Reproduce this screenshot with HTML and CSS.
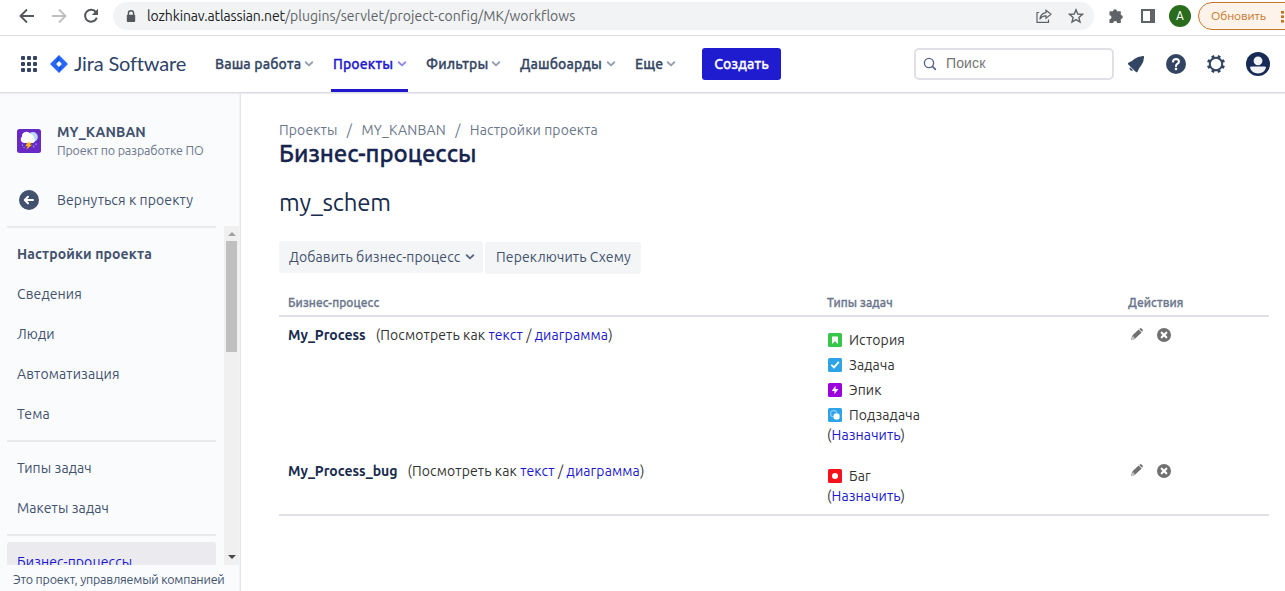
FILE: index.html
```html
<!DOCTYPE html>
<html lang="ru">
<head>
<meta charset="utf-8">
<title>Бизнес-процессы</title>
<link rel="stylesheet" href="styles.css">
</head>
<body>
<svg width="0" height="0" class="defs">
  <defs>
    <symbol id="chev" viewBox="0 0 10 8"><path d="M1.7 2.2 5 5.4 8.3 2.2" fill="none" stroke="currentColor" stroke-width="1.9" stroke-linecap="round" stroke-linejoin="round"/></symbol>
    <symbol id="pencil" viewBox="0 0 12 12"><path d="M.6 11.4 1.3 8.3 3.7 10.7Z" fill="none" stroke="#707070" stroke-width=".7"/><path d="M1.3 7.6 7.6 1.4 10.6 4.4 4.3 10.6ZM8.2 .9 9 .4Q9.8 -.2 10.5.4L11.6 1.5Q12.2 2.3 11.6 3L11.1 3.8Z" fill="#707070"/></symbol>
    <symbol id="remove" viewBox="0 0 14 14"><circle cx="7" cy="7" r="7" fill="#707070"/><path d="M4.7 4.7 9.3 9.3M9.3 4.7 4.7 9.3" stroke="#fff" stroke-width="2.2" stroke-linecap="round"/></symbol>
  </defs>
</svg>

<div class="browser">
  <svg class="ic back" width="16" height="16" viewBox="0 0 16 16"><path d="M15 8H2M8 1.5 1.5 8 8 14.5" fill="none" stroke="#54575b" stroke-width="1.9"/></svg>
  <svg class="ic forward" width="16" height="16" viewBox="0 0 16 16"><path d="M1 8H14M8 1.5 14.5 8 8 14.5" fill="none" stroke="#bdbfc1" stroke-width="1.8"/></svg>
  <svg class="ic reload" width="16" height="16" viewBox="0 0 16 16"><path d="M13 4.2A6 6 0 1 0 13.8 9.6" fill="none" stroke="#54575b" stroke-width="2"/><path d="M15 .8V7H8.8Z" fill="#54575b"/></svg>
  <div class="omnibox">
    <svg width="10" height="13" viewBox="0 0 10 13"><path d="M2.4 5.5V3.4a2.6 2.6 0 0 1 5.2 0V5.5" fill="none" stroke="#54575b" stroke-width="1.4"/><rect x=".8" y="4.7" width="8.4" height="7.3" rx="1" fill="#54575b"/></svg>
    <span class="url"><span class="host">lozhkinav.atlassian.net</span><span class="path">/plugins/servlet/project-config/MK/workflows</span></span>
    <svg class="share" width="16" height="16" viewBox="0 0 16 16" fill="none" stroke="#5f6368" stroke-width="1.2"><path d="M3.2 4.5H1V14.3H12.5V11.5"/><path d="M10 2.2 15 6.2 10 10.2V7.9Q6 7.6 3.8 11.2 4.4 5.4 10 4.6Z"/></svg>
    <svg class="star" width="16" height="16" viewBox="0 0 16 16"><path d="M8 1.7 9.8 6 14.5 6.4 10.9 9.5 12 14 8 11.6 4 14 5.1 9.5 1.5 6.4 6.2 6Z" fill="none" stroke="#5f6368" stroke-width="1.4"/></svg>
  </div>
  <svg class="puzzle" width="16" height="16" viewBox="0 0 16 16"><path d="M1.5 3.2H5A2 2 0 0 1 9 3.2H12.8V7A2 2 0 0 1 12.8 11V15H9.2A2 2 0 0 0 5.2 15H1.5V11.2A2 2 0 0 0 1.5 7.2Z" fill="#5f6368"/></svg>
  <svg class="panel" width="14" height="14" viewBox="0 0 14 14"><rect x="1" y="1" width="12" height="12" fill="#fff" stroke="#5f6368" stroke-width="2"/><rect x="9" y="1" width="4.5" height="12" fill="#5f6368"/></svg>
  <span class="profile">A</span>
  <div class="update"><span>Обновить</span><i class="dots"></i></div>
</div>

<header class="nav">
  <svg class="switcher" width="16" height="16" viewBox="0 0 16 16" fill="#344563"><rect width="4" height="4" rx="1"/><rect x="6" width="4" height="4" rx="1"/><rect x="12" width="4" height="4" rx="1"/><rect y="6" width="4" height="4" rx="1"/><rect x="6" y="6" width="4" height="4" rx="1"/><rect x="12" y="6" width="4" height="4" rx="1"/><rect y="12" width="4" height="4" rx="1"/><rect x="6" y="12" width="4" height="4" rx="1"/><rect x="12" y="12" width="4" height="4" rx="1"/></svg>
  <svg class="logo" width="18" height="18" viewBox="0 0 18 18"><path d="M9 0 17.5 8.4Q18 9 17.5 9.6L9 18 .5 9.6Q0 9 .5 8.4Z" fill="#2668fa"/><path d="M9 1.5V6L7 8Q5.6 5.4 9 1.5Z" fill="#1450d8"/><path d="M9 16.5V12L11 10Q12.4 12.6 9 16.5Z" fill="#1450d8"/><path d="M9 6.1 11.9 9 9 11.9 6.1 9Z" fill="#fff"/></svg>
  <span class="brand">Jira Software</span>
  <nav class="menu">
    <a class="m1"><span>Ваша работа</span><svg width="10" height="8"><use href="#chev"/></svg></a>
    <a class="m2 active"><span>Проекты</span><svg width="10" height="8"><use href="#chev"/></svg></a>
    <a class="m3"><span>Фильтры</span><svg width="10" height="8"><use href="#chev"/></svg></a>
    <a class="m4"><span>Дашбоарды</span><svg width="10" height="8"><use href="#chev"/></svg></a>
    <a class="m5"><span>Еще</span><svg width="10" height="8"><use href="#chev"/></svg></a>
  </nav>
  <button class="create"><span>Создать</span></button>
  <div class="search"><svg width="14" height="14" viewBox="0 0 14 14"><circle cx="6" cy="6" r="4.6" fill="none" stroke="#56658a" stroke-width="1.4"/><path d="M9.4 9.4 12.4 12.4" stroke="#56658a" stroke-width="1.6" stroke-linecap="round"/></svg><span>Поиск</span></div>
  <svg class="bell" width="18" height="18" viewBox="0 0 18 18" fill="#344563"><path d="M1 9.3Q.6 8.2 1.8 7.6 5.2 6.4 7.3 4 10.5 1.2 16 .9 17.2.8 17.1 2 16.8 7.5 14 10.7 11.8 12.8 10.6 16.6 10 17.8 8.9 17Z"/><path d="M3 12.2 6.2 15.4Q4.6 16.4 3.2 15.1 2 13.8 3 12.2Z"/></svg>
  <svg class="help" width="20" height="20" viewBox="0 0 20 20"><circle cx="10" cy="10" r="10" fill="#344563"/><path d="M7 7.6Q7.2 5 10 5 13 5.1 13 7.7 12.9 9 11.3 9.9 10 10.6 10 12.2" fill="none" stroke="#fff" stroke-width="2" stroke-linecap="round"/><circle cx="10" cy="15" r="1.3" fill="#fff"/></svg>
  <svg class="gear" width="18" height="18" viewBox="0 0 18 18"><g stroke="#344563" fill="none" transform="rotate(22.5 9 9)"><circle cx="9" cy="9" r="6.2" stroke-width="2"/><path d="M9 0V3M9 15V18M0 9H3M15 9H18M2.6 2.6 4.8 4.8M13.2 13.2 15.4 15.4M15.4 2.6 13.2 4.8M4.8 13.2 2.6 15.4" stroke-width="3"/></g></svg>
  <svg class="user" width="24" height="24" viewBox="0 0 24 24"><circle cx="12" cy="12" r="12" fill="#172b56"/><circle cx="12" cy="8.8" r="4.4" fill="#f2f3f6"/><path d="M4 15.8Q4 14.5 5.5 14.5H18.5Q20 14.5 20 15.8 18.2 21.5 12 21.5 5.8 21.5 4 15.8Z" fill="#f2f3f6"/></svg>
</header>

<div class="body">
  <aside class="sidebar">
    <div class="project">
      <svg width="24" height="24" viewBox="0 0 24 24"><rect width="24" height="24" rx="2.5" fill="#6929c4"/><circle cx="15.8" cy="8" r="5" fill="#b9dafb"/><path d="M7 14A3.6 3.6 0 0 1 4.9 7.7 4.6 4.6 0 0 1 13.4 5 4.6 4.6 0 0 1 17 9.5 3.1 3.1 0 0 1 16.3 14Z" fill="#fff"/><path d="M10.5 13.5H14.5L13 15.8H15.2L9 20.8 10.8 17.2H8.3Z" fill="#ffb900"/><path d="M5.5 15.5V17M16.8 16.5V18.5M19 14.5V16M7 18V19" stroke="#98b7f1" stroke-width="1"/></svg>
      <div><b>MY_KANBAN</b><small>Проект по разработке ПО</small></div>
    </div>
    <a class="return"><svg width="20" height="20" viewBox="0 0 20 20"><circle cx="10" cy="10" r="10" fill="#42526e"/><path d="M14 10H6.5M9 6.8 5.8 10 9 13.2" fill="none" stroke="#fff" stroke-width="2" stroke-linecap="round" stroke-linejoin="round"/></svg><span>Вернуться к проекту</span></a>
    <div class="scroller">
      <div class="links">
        <a class="l0">Настройки проекта</a>
        <a class="l1">Сведения</a>
        <a class="l2">Люди</a>
        <a class="l3">Автоматизация</a>
        <a class="l4">Тема</a>
        <hr>
        <a class="l5">Типы задач</a>
        <a class="l6">Макеты задач</a>
        <hr>
        <a class="selected">Бизнес-процессы</a>
      </div>
      <div class="track"><i class="up"></i><i class="thumb"></i><i class="down"></i></div>
    </div>
    <footer><span>Это проект, управляемый компанией</span></footer>
  </aside>

  <main>
    <div class="crumbs"><span class="c1">Проекты</span><i>/</i><span class="c2">MY_KANBAN</span><i>/</i><span class="c3">Настройки проекта</span></div>
    <h1>Бизнес-процессы</h1>
    <h2>my_schem</h2>
    <div class="actions">
      <button class="add"><span>Добавить бизнес-процесс</span><svg width="10" height="8"><use href="#chev"/></svg></button>
      <button class="switch"><span>Переключить Схему</span></button>
    </div>
    <div class="table">
      <div class="row head"><span class="h1c">Бизнес-процесс</span><span class="h2c">Типы задач</span><span class="h3c">Действия</span></div>
      <div class="row r1">
        <div class="name"><b class="n1">My_Process</b><span class="view">(Посмотреть как <a>текст</a> / <a>диаграмма</a>)</span></div>
        <div class="types">
          <div class="t1"><svg width="14" height="14" viewBox="0 0 14 14"><rect width="14" height="14" rx="1.5" fill="#36c64c"/><path d="M4 3.5H10V11L7 8.2 4 11Z" fill="#fff"/></svg><span>История</span></div>
          <div class="t2"><svg width="14" height="14" viewBox="0 0 14 14"><rect width="14" height="14" rx="1.5" fill="#2ea3e8"/><path d="M3.9 7.3 6 9.4 10.4 4.4" fill="none" stroke="#fff" stroke-width="1.8" stroke-linecap="round"/></svg><span>Задача</span></div>
          <div class="t3"><svg width="14" height="14" viewBox="0 0 14 14"><rect width="14" height="14" rx="1.5" fill="#9c00dc"/><path d="M7.6 2.8V6H10.4L6.5 11.2V8H3.7Z" fill="#fff"/></svg><span>Эпик</span></div>
          <div class="t4"><svg width="14" height="14" viewBox="0 0 14 14"><rect width="14" height="14" rx="1.5" fill="#2ea3e8"/><rect x="2.8" y="2.8" width="5.8" height="5.8" rx="1.6" fill="none" stroke="#a5d7f6"/><rect x="5.6" y="5.6" width="6" height="6" rx="1.8" fill="#fff"/></svg><span>Подзадача</span></div>
          <p>(<a>Назначить</a>)</p>
        </div>
        <div class="ops"><svg width="12" height="12"><use href="#pencil"/></svg><svg width="14" height="14"><use href="#remove"/></svg></div>
      </div>
      <div class="row r2">
        <div class="name"><b class="n2">My_Process_bug</b><span class="view">(Посмотреть как <a>текст</a> / <a>диаграмма</a>)</span></div>
        <div class="types">
          <div class="t5"><svg width="14" height="14" viewBox="0 0 14 14"><rect width="14" height="14" rx="1.5" fill="#f5121d"/><circle cx="7" cy="7" r="3" fill="#fff"/></svg><span>Баг</span></div>
          <p>(<a>Назначить</a>)</p>
        </div>
        <div class="ops"><svg width="12" height="12"><use href="#pencil"/></svg><svg width="14" height="14"><use href="#remove"/></svg></div>
      </div>
    </div>
  </main>
</div>
</body>
</html>
```

FILE: styles.css
```css
* { box-sizing: border-box; }
body { margin: 0; width: 1285px; height: 591px; overflow: hidden; background: #fff; font: 14px/20px Ubuntu, "Noto Sans", sans-serif; letter-spacing: .12px; color: #333; display: flex; flex-direction: column; white-space: nowrap; }
svg { display: block; flex: none; overflow: visible; }
.defs { display: none; }
button { border: 0; padding: 0; font: inherit; letter-spacing: inherit; }
i { font-style: normal; }
a { color: #2018ce; }

.browser { height: 36px; flex: none; display: flex; align-items: center; border-bottom: 1px solid #dcdde0; padding: 0 0 3px 19px; overflow: hidden; }
.forward { margin-left: 16px; }
.reload { margin-left: 16px; }
.omnibox { margin-left: 14px; width: 981px; flex: none; height: 28px; border-radius: 14px; background: #f1f3f4; display: flex; align-items: center; padding: 0 10px 0 13px; }
.url { margin-left: 11px; flex: 1; color: #5f6368; }
.host { color: #202124; letter-spacing: -.12px; }
.path { letter-spacing: .03px; }
.star { margin-left: 16px; }
.puzzle { margin-left: 14px; }
.panel { margin-left: 17px; }
.profile { margin-left: 14px; width: 22px; height: 22px; border-radius: 50%; background: #2a6b1c; color: #fff; font: 12px/22px Roboto, sans-serif; text-align: center; flex: none; }
.update { margin-left: 7px; width: 110px; height: 28px; flex: none; border: 1px solid #c9772b; border-radius: 14px; background: #fdf3ea; color: #c77324; display: flex; align-items: center; padding-left: 12px; font-size: 12px; letter-spacing: -.1px; }
.update span { width: 55px; }
.dots { margin-left: 15px; width: 3px; height: 13px; background: radial-gradient(circle, #c77324 1.4px, transparent 1.7px) 0 0/3px 4.5px; }

.nav { height: 57px; flex: none; display: flex; align-items: center; padding-left: 21px; border-bottom: 1px solid #dddee5; box-shadow: 0 1px 1px #ededf1; z-index: 1; color: #344563; font-weight: 500; }
.menu, .create, h1, .head { -webkit-text-stroke: .3px currentColor; }
.logo { margin-left: 13px; }
.brand { width: 112px; margin: -3px 0 0 6px; font: 20px/24px Lato, sans-serif; letter-spacing: -.17px; color: #2f4368; }
.menu { align-self: stretch; display: flex; margin-left: 29px; }
.menu a { color: #344563; display: flex; align-items: center; justify-content: space-between; margin-right: 21px; }
.menu svg { color: #97a0af; }
.m1 { width: 99px; }
.menu .m1 { margin-right: 17px; }
.menu .m2 { width: 77px; padding: 3px 1px 0 2px; margin-right: 18px; color: #2018ce; border-bottom: 3px solid #2018ce; }
.menu .m2 svg { color: #8f8be6; }
.m3 { width: 75px; }
.menu .m3 { margin-right: 19px; }
.m4 { width: 96px; }
.menu .m4 { margin-right: 19px; }
.m5 { width: 41px; }
.menu .m5 { margin-right: 0; }
.create { margin-left: 26px; width: 79px; height: 32px; border-radius: 3px; background: #1f1bce; color: #fff; font-weight: 500; }
.search { margin-left: 133px; width: 200px; height: 32px; border: 2px solid #dfe1e6; border-radius: 5px; display: flex; align-items: center; padding-left: 7px; font: 14px/20px "Liberation Sans", sans-serif; color: #757575; }
.search span { margin: -2px 0 0 9px; }
.bell { margin-left: 13px; }
.help { margin-left: 21px; }
.gear { margin-left: 21px; }
.user { margin-left: 21px; }

.body { flex: 1; min-height: 0; display: flex; }
.sidebar { width: 241px; flex: none; background: #fafbfd; border-right: 1px solid #e3e4e8; box-shadow: inset -1px 0 #f1f2f4; display: flex; flex-direction: column; color: #42526e; }
.project { display: flex; align-items: center; height: 36px; margin: 30px 0 0 17px; }
.project div { margin-left: 16px; }
.project b, .project small { display: block; line-height: 18px; width: max-content; }
.project small { font-size: 12.5px; color: #6b778c; letter-spacing: -.17px; }
.return { display: flex; align-items: center; margin: 31px 0 0 19px; color: #42526e; }
.return span { margin-left: 18px; }
.scroller { margin-top: 16px; height: 339px; flex: none; display: flex; justify-content: space-between; overflow: hidden; }
.links { margin-left: 7px; width: 209px; border-top: 2px solid #e9eaed; padding-top: 6px; height: 500px; }
.links a { display: block; height: 40px; line-height: 40px; padding-left: 10px; color: #42526e; }
.links hr { border: 0; height: 2px; background: #e9eaed; margin: 6px 0; }
.links .l0 { font-weight: 700; }
.links .selected { color: #2018ce; background: #ebebef; border-radius: 3px; }
.track { width: 15px; margin-right: 1px; background: #f0f0f0; display: flex; flex-direction: column; align-items: center; }
.up { border: 4px solid transparent; border-top: 0; border-bottom: 4px solid #a0a0a0; margin-top: 6px; }
.thumb { width: 11px; height: 111px; background: #c0c0c0; margin-top: 5px; }
.down { border: 4px solid transparent; border-bottom: 0; border-top: 4px solid #484848; margin-top: auto; margin-bottom: 6px; }
.sidebar footer { font-size: 12.5px; line-height: 29px; padding-left: 13px; letter-spacing: -.2px; }

main { flex: 1; padding: 27px 16px 0 38px; }
.crumbs { display: flex; color: #6b778c; }
.crumbs i { width: 24px; text-align: center; }
h1 { font-size: 24px; line-height: 28px; font-weight: 500; letter-spacing: -.08px; margin: 0; width: max-content; color: #17244f; }
h2 { font-size: 24px; line-height: 28px; font-weight: 400; color: #172b4d; margin: 21px 0 0; width: max-content; letter-spacing: -.2px; }
.actions { display: flex; margin-top: 24px; }
.actions button { height: 32px; border-radius: 3px; background: #f4f5f7; color: #42526e; display: flex; align-items: center; }
.actions svg { color: #5e6c84; }
.add { width: 204px; padding: 0 8px 0 10px; justify-content: space-between; }
.actions .switch { width: 156px; margin: 1px 0 0 2px; padding: 0 0 2px 11px; }
.table { border-bottom: 2px solid #dfe1e6; margin-top: 18px; }
.row { display: grid; grid-template-columns: 539px 301px 1fr; padding-left: 9px; }
.head { font-size: 12px; line-height: 22px; font-weight: 500; letter-spacing: .08px; color: #6b778c; height: 25px; border-bottom: 2px solid #dfe1e6; }
.r1 { height: 136px; padding-top: 8px; }
.r2 { height: 61px; padding-top: 8px; }
.name b { color: #172b4d; letter-spacing: 0; }
.view { margin-left: 10px; }
.types { padding-top: 5px; }
.types div { display: flex; align-items: center; height: 25px; padding-bottom: 5px; padding-left: 1px; }
.types div span { margin-left: 7px; }
.types p { margin: -5px 0 0; line-height: 20px; }
.ops { display: flex; padding: 3px 0 0 3px; }
.ops svg + svg { margin-left: 14px; }
```
